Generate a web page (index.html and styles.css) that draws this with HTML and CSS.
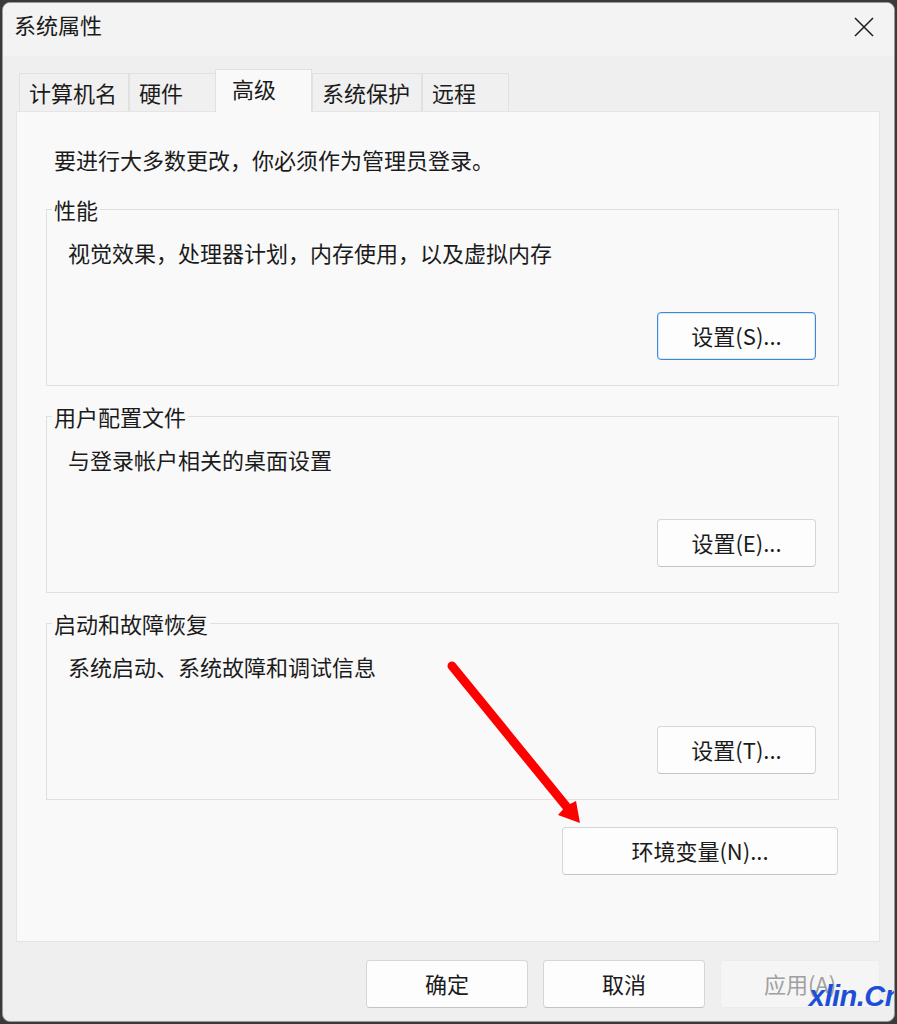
FILE: index.html
```html
<!DOCTYPE html>
<html lang="zh-CN">
    <head>
        <meta charset="UTF-8" />
        <meta name="viewport" content="width=device-width, initial-scale=1.0" />
        <title>系统属性</title>
        <link rel="stylesheet" href="styles.css">
    </head>
    <body>
        <div class="window">
            <div class="titlebar">
                <span class="title">系统属性</span>
                <svg class="close" width="20" height="20" viewBox="0 0 20 20">
                    <path d="M1 1L19 19M19 1L1 19" stroke="#1b1b1b" stroke-width="1.5" fill="none" />
                </svg>
            </div>

            <div class="tabs">
                <div class="tab">计算机名</div>
                <div class="tab">硬件</div>
                <div class="tab active">高级</div>
                <div class="tab">系统保护</div>
                <div class="tab">远程</div>
            </div>

            <div class="panel">
                <p class="intro">要进行大多数更改，你必须作为管理员登录。</p>

                <fieldset class="group">
                    <legend>性能</legend>
                    <div class="group-body">
                        <p class="desc">视觉效果，处理器计划，内存使用，以及虚拟内存</p>
                        <div class="group-actions">
                            <button class="btn btn-setting btn-focus">设置(S)...</button>
                        </div>
                    </div>
                </fieldset>

                <fieldset class="group">
                    <legend>用户配置文件</legend>
                    <div class="group-body">
                        <p class="desc">与登录帐户相关的桌面设置</p>
                        <div class="group-actions">
                            <button class="btn btn-setting">设置(E)...</button>
                        </div>
                    </div>
                </fieldset>

                <fieldset class="group">
                    <legend>启动和故障恢复</legend>
                    <div class="group-body">
                        <p class="desc">系统启动、系统故障和调试信息</p>
                        <div class="group-actions">
                            <button class="btn btn-setting">设置(T)...</button>
                        </div>
                    </div>
                </fieldset>

                <div class="env-row">
                    <button class="btn btn-env">环境变量(N)...</button>
                </div>
            </div>

            <div class="footer">
                <button class="btn btn-footer">确定</button>
                <button class="btn btn-footer">取消</button>
                <button class="btn btn-footer btn-disabled">应用(A)</button>
            </div>

            <!-- annotation drawn over the dialog -->
            <svg class="arrow" width="897" height="1024" viewBox="0 0 897 1024">
                <line x1="452" y1="666" x2="566" y2="806" stroke="#ff0000" stroke-width="9" stroke-linecap="round" />
                <polygon points="580,823 558,815 566,806 576,801" fill="#ff0000" />
            </svg>
            <div class="watermark">xlin.Cn</div>
        </div>
    </body>
</html>
```

FILE: styles.css
```css
body {
    margin: 0;
    background-color: #3a3a3a;
    font-family: "Noto Sans CJK SC", "Noto Sans", sans-serif;
    color: #1b1b1b;
    overflow: hidden;
}

.window {
    position: relative;
    box-sizing: border-box;
    width: 893px;
    height: 1020px;
    margin: 2px 2px 2px 2px;
    background-color: #efefef;
    border: 1px solid #9a9a9a;
    border-radius: 8px;
    overflow: hidden;
}

.titlebar {
    display: flex;
    align-items: center;
    justify-content: space-between;
    height: 53px;
    box-sizing: border-box;
    padding: 0 20px 6px 11px;
    background-color: #f3f3f3;
}

.title {
    padding-bottom: 6px;
    font-size: 22px;
    line-height: 30px;
}

.tabs {
    display: flex;
    align-items: flex-end;
    margin: 13px 0 -1px 16px;
    height: 43px;
}

.tab {
    box-sizing: border-box;
    height: 38px;
    min-width: 87px;
    margin-bottom: 1px;
    padding: 1px 11px 0 9px;
    font-size: 22px;
    line-height: 34px;
    background-color: #f0f0f0;
    border: 1px solid #e1e1e1;
    border-bottom: none;
}

.tab.active {
    z-index: 1;
    height: 43px;
    min-width: 97px;
    margin: 0 0 0 -1px;
    padding: 1px 12px 0 16px;
    background-color: #f9f9f9;
}

.panel {
    margin: 0 14px 0 13px;
    padding: 32px 40px 66px 29px;
    background-color: #f9f9f9;
    border: 1px solid #e5e5e5;
}

.intro {
    margin: 0 0 0 8px;
    font-size: 22px;
    line-height: 30px;
}

.group {
    margin: 19px 0 0 0;
    padding: 0;
    border: 1px solid #e0e0e0;
    min-width: 0;
}

.group + .group {
    margin-top: 14px;
}

.group legend {
    margin-left: 5px;
    padding: 2px 2px 2px;
    font-size: 22px;
    line-height: 28px;
}

.group-body {
    padding: 12px 22px 25px 21px;
}

.desc {
    margin: 0;
    font-size: 22px;
    line-height: 30px;
}

.group-actions {
    display: flex;
    justify-content: flex-end;
    margin-top: 45px;
}

.btn {
    box-sizing: border-box;
    height: 48px;
    padding: 0 0 2px;
    font-family: inherit;
    font-size: 22px;
    color: #1b1b1b;
    background-color: #fdfdfd;
    border: 1px solid #d6d6d6;
    border-bottom-color: #c4c4c4;
    border-radius: 4px;
}

.btn-setting {
    width: 159px;
}

.btn-focus {
    border: 1px solid #3d8bd8;
    box-shadow: inset 0 0 0 1px #d6e7f8;
}

.env-row {
    display: flex;
    justify-content: flex-end;
    margin: 27px 1px 0 0;
}

.btn-env {
    width: 276px;
}

.footer {
    display: flex;
    justify-content: flex-end;
    gap: 15px;
    margin: 18px 14px 0 13px;
}

.btn-footer {
    width: 162px;
}

.btn-footer.btn-disabled {
    width: 160px;
    color: #a0a0a0;
    background-color: #f5f5f5;
    border-color: #ececec;
}

.arrow {
    position: absolute;
    top: -3px;
    left: -3px;
    pointer-events: none;
}

.watermark {
    position: absolute;
    right: -8px;
    bottom: 8px;
    font-family: "Liberation Sans", sans-serif;
    font-size: 29px;
    font-weight: bold;
    font-style: italic;
    color: #1d4fd6;
    letter-spacing: -0.5px;
}
```
